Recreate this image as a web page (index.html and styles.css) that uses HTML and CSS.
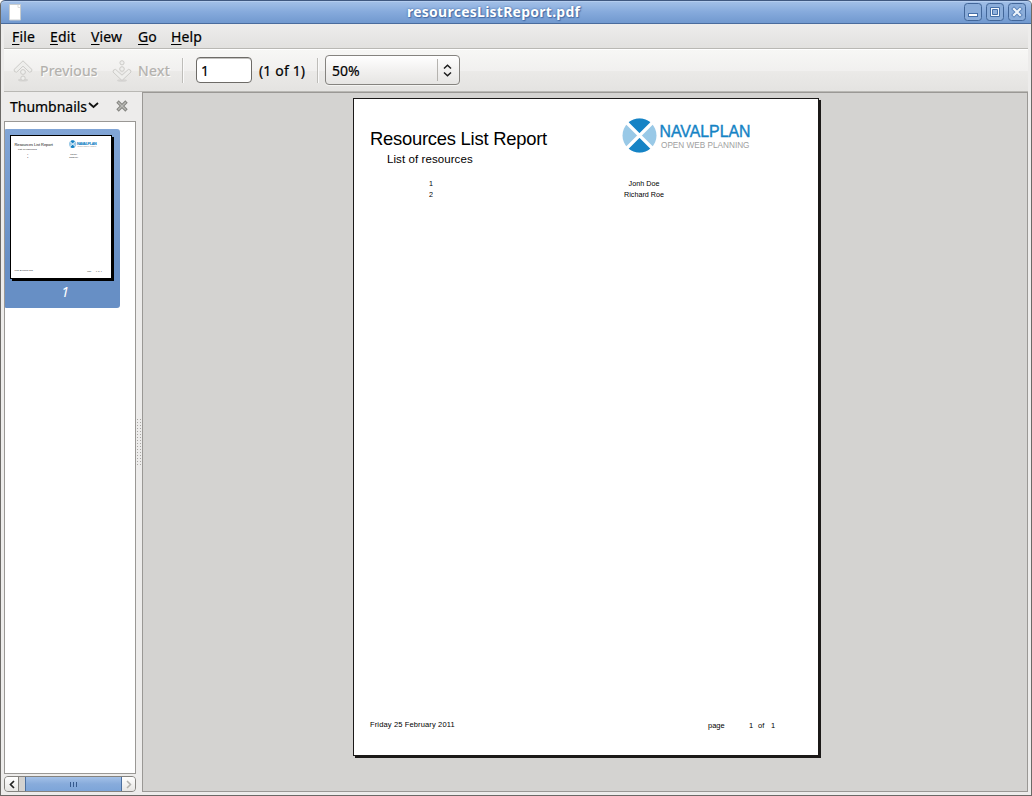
FILE: index.html
```html
<!DOCTYPE html>
<html lang="en">
<head>
<meta charset="utf-8">
<title>resourcesListReport.pdf</title>
<link rel="stylesheet" href="styles.css">
</head>
<body>
<div class="window">
  <header class="titlebar">
    <svg class="doc-icon" width="12" height="17" viewBox="0 0 12 17"><path d="M.5.5h11v15.5H.5z" fill="#fff" stroke="#c9cdcf"/><path d="M9 1v2.5h2" fill="none" stroke="#ddd"/></svg>
    <span class="title">resourcesListReport.pdf</span>
    <div class="controls">
      <svg width="18" height="18" viewBox="0 0 18 18"><rect class="cb" x=".5" y=".5" width="17" height="17" rx="3"/><rect x="4.5" y="10.5" width="9" height="3" fill="#fff" stroke="#456fa8"/></svg>
      <svg width="18" height="18" viewBox="0 0 18 18"><rect class="cb" x=".5" y=".5" width="17" height="17" rx="3"/><path d="M4.5 4.5h9v9h-9z" fill="#f4f8fd" stroke="#456fa8"/><path d="M6.5 6.5h5v5h-5z" fill="#8fb0dd" stroke="#456fa8"/></svg>
      <svg width="18" height="18" viewBox="0 0 18 18"><rect class="cb" x=".5" y=".5" width="17" height="17" rx="3"/><path d="M6 6l6 6m0-6l-6 6" stroke="#5a82b9" stroke-width="4" stroke-linecap="square"/><path d="M6 6l6 6m0-6l-6 6" stroke="#eef4fb" stroke-width="2.2" stroke-linecap="square"/></svg>
    </div>
  </header>
  <nav class="menubar">
    <span class="m-file"><u>F</u>ile</span><span class="m-edit"><u>E</u>dit</span><span class="m-view"><u>V</u>iew</span><span class="m-go"><u>G</u>o</span><span class="m-help"><u>H</u>elp</span>
  </nav>
  <div class="toolbar">
    <div class="tool prev">
      <svg width="20" height="22" viewBox="0 0 20 22"><ellipse cx="10" cy="20" rx="5" ry="1.5" fill="#d5d4d2"/><path class="arrow" d="M10 .8L19 9.6q.3 2.6-2.6 2.6L10 6.2 3.6 12.2Q.7 12.2 1 9.6z"/><circle class="arrow" cx="10" cy="12" r="2.4"/><circle class="arrow" cx="10" cy="18.2" r="2.2"/></svg>
      <span>Previous</span>
    </div>
    <div class="tool next">
      <svg width="20" height="22" viewBox="0 0 20 22"><ellipse cx="10" cy="20.5" rx="5" ry="1.3" fill="#d5d4d2"/><path class="arrow" d="M10 20.5L1 12q-.3-2.6 2.6-2.6L10 15.2l6.4-5.8q2.9 0 2.6 2.6z"/><circle class="arrow" cx="10" cy="9" r="2.3"/><circle class="arrow" cx="10" cy="2.8" r="2.1"/></svg>
      <span>Next</span>
    </div>
    <i class="sep sep-a"></i>
    <input class="entry" value="1">
    <span class="count">(1 of 1)</span>
    <i class="sep sep-b"></i>
    <div class="combo"><span>50%</span><i></i><svg width="9" height="13" viewBox="0 0 9 13"><path d="M1 4.5L4.5 1.2 8 4.5M1 8.5l3.5 3.3L8 8.5" fill="none" stroke="#1b1b1b" stroke-width="1.5"/></svg></div>
  </div>
  <div class="content">
    <aside class="sidebar">
      <div class="side-head">
        <span>Thumbnails</span>
        <svg class="chev" width="11" height="7" viewBox="0 0 11 7"><path d="M1 1l4.5 4L10 1" fill="none" stroke="#111" stroke-width="1.8"/></svg>
        <svg class="close" width="12" height="12" viewBox="0 0 12 12"><path d="M2.7 2.7l6.6 6.6m0-6.6l-6.6 6.6" stroke="#858581" stroke-width="3.4" stroke-linecap="square"/><path d="M2.7 2.7l6.6 6.6m0-6.6l-6.6 6.6" stroke="#b9b9b5" stroke-width="1.4" stroke-linecap="square"/></svg>
      </div>
      <div class="tree">
        <div class="selected">
          <div class="thumb">
            <svg width="100" height="142" viewBox="0 0 464 656">
              <g font-family="Liberation Sans, sans-serif" fill="#111">
                <text x="16" y="45" font-size="18.5" textLength="178">Resources List Report</text>
                <text x="33" y="64" font-size="11.5" textLength="86">List of resources</text>
                <text x="75" y="88" font-size="7.5">1</text><text x="75" y="99" font-size="7.5">2</text>
                <text x="275" y="88" font-size="7.5">Jonh Doe</text><text x="270" y="99" font-size="7.5">Richard Roe</text>
                <text x="16" y="625" font-size="8" textLength="86">Friday 25 February 2011</text>
                <text x="354" y="628" font-size="8">page</text><text x="395" y="628" font-size="8">1</text><text x="404" y="628" font-size="8">of</text><text x="417" y="628" font-size="8">1</text>
                <text x="306" y="39" font-size="17" fill="#1583c5" stroke="#1583c5" textLength="91">NAVALPLAN</text>
                <text x="307" y="50" font-size="10" fill="#aaa" textLength="89">OPEN WEB PLANNING</text>
              </g>
              <circle cx="286" cy="36" r="17" fill="#99c9e7"/>
              <path d="M286 36L274 24a17 17 0 0 1 24 0zM286 36l12 12a17 17 0 0 1-24 0z" fill="#1583c5"/>
              <path d="M273 23l26 26m0-26l-26 26" stroke="#fff" stroke-width="4"/>
            </svg>
          </div>
          <em>1</em>
        </div>
      </div>
      <div class="scrollbar">
        <div class="sb-btn"><svg width="6" height="9" viewBox="0 0 6 9"><path d="M5 1L1.5 4.5 5 8" fill="none" stroke="#222" stroke-width="1.7"/></svg></div>
        <div class="trough"></div>
        <div class="slider"><i></i><i></i><i></i></div>
        <div class="sb-btn end"><svg width="6" height="9" viewBox="0 0 6 9"><path d="M1 1l3.5 3.5L1 8" fill="none" stroke="#b2b1ad" stroke-width="1.5"/></svg></div>
      </div>
    </aside>
    <div class="handle"><i></i></div>
    <main class="viewer">
      <article class="page">
        <div class="page-head">
          <div class="heads">
            <h1>Resources List Report</h1>
            <h2>List of resources</h2>
          </div>
          <svg class="logo" width="132" height="38" viewBox="0 0 132 38" font-family="Liberation Sans, sans-serif">
            <circle cx="17.5" cy="18.5" r="17" fill="#99c9e7"/>
            <path d="M17.5 18.5l-12-12a17 17 0 0 1 24 0zM17.5 18.5l12 12a17 17 0 0 1-24 0z" fill="#1583c5"/>
            <path d="M4 5l27 27m0-27l-27 27" stroke="#fff" stroke-width="3.2"/>
            <text x="37.5" y="20.3" font-size="16.5" fill="#1583c5" stroke="#1583c5" stroke-width=".4" textLength="91" lengthAdjust="spacingAndGlyphs">NAVALPLAN</text>
            <text x="39" y="31" font-size="9.3" fill="#a0a0a0" textLength="88.5" lengthAdjust="spacingAndGlyphs">OPEN WEB PLANNING</text>
          </svg>
        </div>
        <div class="rows">
          <span>1</span><span class="name">Jonh Doe</span>
          <span>2</span><span class="name">Richard Roe</span>
        </div>
        <footer class="page-foot">
          <span class="date">Friday 25 February 2011</span>
          <span class="pg">page</span><span class="n1">1</span><span class="of">of</span><span class="n2">1</span>
        </footer>
      </article>
    </main>
  </div>
</div>
</body>
</html>
```
FILE: styles.css
```css
* { box-sizing: border-box; }
body { margin: 0; background: #fff; }
.window {
  width: 1032px; height: 796px; display: flex; flex-direction: column;
  background: #edeceb; border: 1px solid #6b6966; border-top: 0;
  border-radius: 5px 5px 0 0; overflow: hidden;
  font: 14px/18px "Noto Sans", sans-serif; color: #000;
  -webkit-text-stroke: .2px;
}
.titlebar {
  height: 24px; flex: none; display: flex; align-items: center; margin: 0 -1px;
  background: linear-gradient(#a4c1e8, #86aadc 50%, #7199cf);
  border: 1px solid #4a6c9d; border-top-color: #405880; border-radius: 5px 5px 0 0;
  box-shadow: inset 0 1px #b4cdef;
}
.doc-icon { margin-left: 8px; }
.title {
  width: 174px; margin-left: 386px; font-weight: bold; font-size: 14px; letter-spacing: .25px;
  color: #fff; text-shadow: 0 0 2px #37609c, 1px 1px 1px #4a70a8; white-space: nowrap;
  -webkit-text-stroke: 0;
}
.controls { display: flex; gap: 4px; margin-left: auto; margin-right: 5px; }
.controls svg { display: block; }
.cb { fill: #8badda; stroke: #426699; }
.menubar {
  height: 25px; flex: none; display: flex; margin: 0 3px; padding: 4px 0 0 8px;
  background: linear-gradient(#eeedec, #e2e1df); border-bottom: 1px solid #b9b8b4;
}
.menubar span { white-space: nowrap; letter-spacing: .15px; }
.menubar u { text-underline-offset: 2px; text-decoration-skip-ink: none; }
.m-file { width: 38px; }
.m-edit { width: 41px; }
.m-view { width: 47px; }
.m-go { width: 33px; }
.toolbar {
  height: 43px; flex: none; display: flex; align-items: center; margin: 0 3px;
  background: linear-gradient(#f7f7f5, #f1f0ef 50%, #ebeae8 51%, #e4e3e1);
  border-top: 1px solid #fff; border-bottom: 1px solid #b9b8b4;
}
.tool { display: flex; align-items: center; color: #b2b0ac; text-shadow: 1px 1px #fff; }
.arrow { fill: #eeeeec; stroke: #cccbc8; }
.prev { width: 98px; padding-left: 9px; gap: 7px; letter-spacing: .2px; }
.next { width: 80px; padding-left: 10px; gap: 6px; letter-spacing: .4px; }
.sep { width: 2px; height: 25px; background: #bebdb9; border-right: 1px solid #fafafa; }
.entry {
  width: 56px; height: 26px; margin-left: 12px; padding: 2px 4px;
  border: 1px solid #6d6b67; border-radius: 4px; outline: 0; margin-bottom: 1px;
  background: #fff; box-shadow: inset 0 1px #c4c3c0; font: 14px/18px "Noto Sans", sans-serif;
}
.count { width: 58px; padding-left: 7px; white-space: nowrap; letter-spacing: .15px; }
.sep-b { margin-left: 7px; }
.combo {
  width: 135px; height: 30px; margin: 0 0 1px 6px; padding: 0 7px 0 6px;
  display: flex; align-items: center; border: 1px solid #85837f; border-radius: 4px;
  background: linear-gradient(#fff, #f2f1f0 50%, #e6e5e3); box-shadow: 0 1px #f4f4f2;
}
.combo span { padding-top: 2px; }
.combo i { width: 1px; height: 22px; background: #b5b3af; margin-left: auto; margin-right: 5px; }
.content { flex: 1; display: flex; margin: 0 3px 3px; min-height: 0; }
.sidebar { width: 132px; display: flex; flex-direction: column; }
.side-head { height: 29px; flex: none; display: flex; align-items: center; padding-left: 6px; }
.side-head span { width: 78px; white-space: nowrap; letter-spacing: -.02px; }
.close { margin-left: 17px; margin-top: -2px; }
.chev { margin-left: 0; margin-top: -2px; }
.tree {
  height: 653px; flex: none; padding-top: 7px; background: #fff; border: 1px solid #9a9895;
}
.selected {
  width: 115px; height: 179px; padding: 6px 0 0 5px;
  background: linear-gradient(#81a5d6, #678fc5 75%); border-radius: 1px 3px 3px 1px;
}
.thumb { width: 102px; height: 144px; background: #fff; border: 1px solid #000; box-shadow: 2px 2px #000; }
.thumb svg { display: block; }
.selected em { display: block; width: 110px; padding-top: 4px; text-align: center; color: #fff; font-size: 14px; -webkit-text-stroke: 0; }
.scrollbar {
  height: 16px; margin-top: 2px; display: flex; flex: none;
  border: 1px solid #85837f; border-radius: 4px; background: #d3d2d0; overflow: hidden;
}
.sb-btn { width: 14px; display: flex; align-items: center; justify-content: center; background: linear-gradient(#fff, #e7e6e4); border-right: 1px solid #85837f; }
.sb-btn.end { width: 13px; border: 0; }
.trough { width: 6px; }
.slider {
  flex: 1; display: flex; align-items: center; justify-content: center; gap: 2px;
  background: linear-gradient(#a4c1e8, #87abdb 50%, #7da5d9); border: solid #4b6f9f; border-width: 0 1px;
}
.slider i { width: 1px; height: 5px; background: #35598d; }
.handle { width: 6px; display: flex; align-items: center; justify-content: center; }
.handle i {
  width: 4px; height: 47px;
  background: repeating-linear-gradient(#a8a6a3 0 1px, transparent 1px 3px) 0 0 / 1px 100% no-repeat,
    repeating-linear-gradient(#a8a6a3 0 1px, transparent 1px 3px) 3px 0 / 1px 100% no-repeat;
}
.viewer {
  flex: 1; padding: 5px 0 0 210px; background: #d4d3d1; border: 1px solid #9a9895;
}
.page {
  width: 466px; height: 658px; display: flex; flex-direction: column;
  background: #fff; border: 1px solid #1b1918; box-shadow: 2px 2px #1b1918;
  font-family: "Liberation Sans", sans-serif; color: #000;
  -webkit-text-stroke: 0;
}
.page-head { height: 79px; display: flex; padding: 18px 0 0 16px; }
.heads { width: 252px; white-space: nowrap; }
.logo { flex: none; overflow: visible; }
h1, h2 { margin: 0; font-weight: normal; }
h1 { padding-top: 11px; font-size: 18.4px; line-height: 22px; letter-spacing: -.24px; }
h2 { padding: 2px 0 0 17px; font-size: 11.5px; line-height: 14px; letter-spacing: .08px; }
.rows {
  display: grid; grid-template-columns: 193px 60px; grid-auto-rows: 11px;
  padding-left: 75px; font-size: 7.2px; line-height: 11px;
}
.name { text-align: center; margin-left: -8px; width: 60px; white-space: nowrap; }
.page-foot {
  margin-top: auto; height: 35px; display: flex; padding-left: 16px;
  font-size: 7.5px; line-height: 10px; white-space: nowrap;
}
.date { width: 338px; letter-spacing: .14px; }
.pg { width: 41px; padding-top: 1px; }
.n1 { width: 9px; padding-top: 1px; }
.of { width: 13px; padding-top: 1px; }
.n2 { padding-top: 1px; }
```
